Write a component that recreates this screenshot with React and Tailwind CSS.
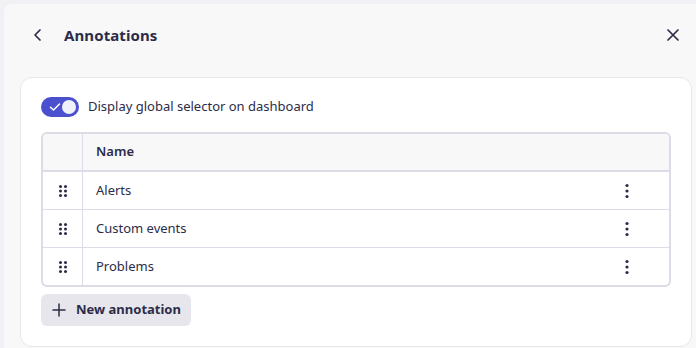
import React, { useState } from 'react'

const rows = ['Alerts', 'Custom events', 'Problems']

function Grip() {
  return (
    <svg width="10" height="14" viewBox="0 0 10 14" fill="#2c2c48">
      <circle cx="2.5" cy="2.5" r="1.5" />
      <circle cx="7.5" cy="2.5" r="1.5" />
      <circle cx="2.5" cy="7" r="1.5" />
      <circle cx="7.5" cy="7" r="1.5" />
      <circle cx="2.5" cy="11.5" r="1.5" />
      <circle cx="7.5" cy="11.5" r="1.5" />
    </svg>
  )
}

function Kebab() {
  return (
    <svg width="4" height="16" viewBox="0 0 4 16" fill="#2c2c48">
      <circle cx="2" cy="2.5" r="1.6" />
      <circle cx="2" cy="8" r="1.6" />
      <circle cx="2" cy="13.5" r="1.6" />
    </svg>
  )
}

export default function App() {
  const [on, setOn] = useState(true)

  return (
    <div className="h-[348px] w-[696px] overflow-hidden bg-[#f1f1f5] pl-1 pt-1 text-[#2c2c48]" style={{ fontFamily: '"Noto Sans", sans-serif' }}>
      <div className="h-full rounded-tl-lg bg-[#f8f8f9] pl-4 pr-1">
        <div className="flex h-[60px] items-center pt-[2px]">
          <button className="ml-[8px] flex h-5 w-5 items-center justify-center">
            <svg width="16" height="16" viewBox="0 0 16 16" fill="none" stroke="#2c2c48" strokeWidth="1.7" strokeLinecap="round" strokeLinejoin="round">
              <path d="M10 3 5 8l5 5" />
            </svg>
          </button>
          <h1 className="ml-[16px] text-[15px] font-bold tracking-[0.1px]">Annotations</h1>
          <button className="ml-auto mr-[9px] flex h-5 w-5 items-center justify-center">
            <svg width="16" height="16" viewBox="0 0 16 16" fill="none" stroke="#2c2c48" strokeWidth="1.7" strokeLinecap="round">
              <path d="M3 3l10 10M13 3 3 13" />
            </svg>
          </button>
        </div>

        <div className="mt-[13px] h-[270px] rounded-xl border border-[#e7e7ec] bg-white pl-5 pr-5 pt-[19px]">
          <label className="flex items-center gap-[9px]">
            <button
              onClick={() => setOn(!on)}
              className="relative flex h-5 w-[38px] items-center rounded-full bg-[#4b50cf]"
            >
              <svg className="absolute left-[8px]" width="12" height="10" viewBox="0 0 12 10" fill="none" stroke="#fff" strokeWidth="1.5" strokeLinecap="round" strokeLinejoin="round">
                <path d="M1.5 5.2 4.5 8 10.5 2" />
              </svg>
              <span className="absolute right-[3px] h-[14px] w-[14px] rounded-full bg-[#eef0fb]" />
            </button>
            <span className="text-[13px]">Display global selector on dashboard</span>
          </label>

          <div className="mt-[15px] overflow-hidden rounded-md border-2 border-[#dcdbe6]">
            <div className="flex h-[38px] items-center border-b-2 border-[#dcdbe6] bg-[#f8f8f9]">
              <div className="h-full w-[40px] border-r border-[#dcdbe6]" />
              <div className="pl-[13px] text-[13px] font-semibold">Name</div>
            </div>
            {rows.map((r, i) => (
              <div key={r} className={'flex items-center ' + (i < rows.length - 1 ? 'h-[38px] border-b border-[#dcdbe6]' : 'h-[37px]')}>
                <div className="flex h-full w-[40px] items-center justify-center border-r border-[#dcdbe6]">
                  <Grip />
                </div>
                <div className="flex-1 pl-[13px] text-[13px]">{r}</div>
                <div className="mr-[40px] flex items-center">
                  <Kebab />
                </div>
              </div>
            ))}
          </div>

          <button className="mt-[7px] flex h-8 items-center gap-[10px] rounded-md bg-[#e6e6ec] pl-[11px] pr-[10px] text-[13px] font-bold">
            <svg width="14" height="14" viewBox="0 0 14 14" fill="none" stroke="#2c2c48" strokeWidth="1.5" strokeLinecap="round">
              <path d="M7 1v12M1 7h12" />
            </svg>
            New annotation
          </button>
        </div>
      </div>
    </div>
  )
}
